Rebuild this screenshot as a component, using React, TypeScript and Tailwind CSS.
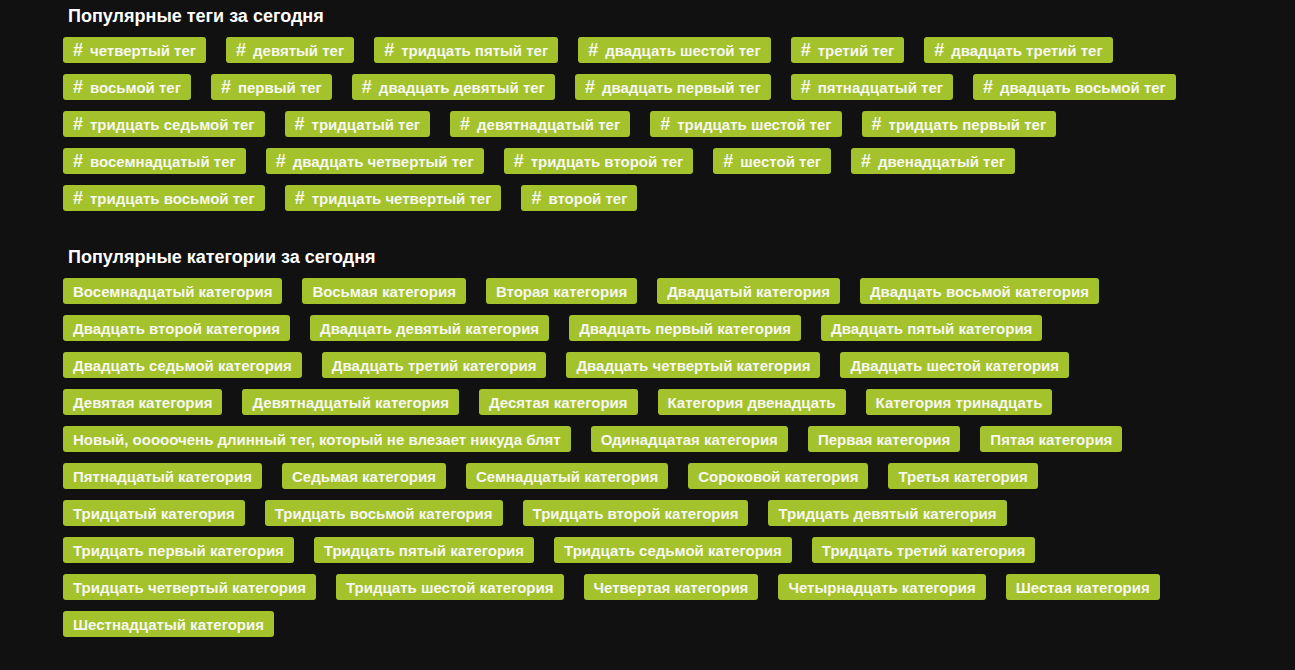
const tags = [
  "четвертый тег",
  "девятый тег",
  "тридцать пятый тег",
  "двадцать шестой тег",
  "третий тег",
  "двадцать третий тег",
  "восьмой тег",
  "первый тег",
  "двадцать девятый тег",
  "двадцать первый тег",
  "пятнадцатый тег",
  "двадцать восьмой тег",
  "тридцать седьмой тег",
  "тридцатый тег",
  "девятнадцатый тег",
  "тридцать шестой тег",
  "тридцать первый тег",
  "восемнадцатый тег",
  "двадцать четвертый тег",
  "тридцать второй тег",
  "шестой тег",
  "двенадцатый тег",
  "тридцать восьмой тег",
  "тридцать четвертый тег",
  "второй тег",
];

const categories = [
  "Восемнадцатый категория",
  "Восьмая категория",
  "Вторая категория",
  "Двадцатый категория",
  "Двадцать восьмой категория",
  "Двадцать второй категория",
  "Двадцать девятый категория",
  "Двадцать первый категория",
  "Двадцать пятый категория",
  "Двадцать седьмой категория",
  "Двадцать третий категория",
  "Двадцать четвертый категория",
  "Двадцать шестой категория",
  "Девятая категория",
  "Девятнадцатый категория",
  "Десятая категория",
  "Категория двенадцать",
  "Категория тринадцать",
  "Новый, ооооочень длинный тег, который не влезает никуда блят",
  "Одинадцатая категория",
  "Первая категория",
  "Пятая категория",
  "Пятнадцатый категория",
  "Седьмая категория",
  "Семнадцатый категория",
  "Сороковой категория",
  "Третья категория",
  "Тридцатый категория",
  "Тридцать восьмой категория",
  "Тридцать второй категория",
  "Тридцать девятый категория",
  "Тридцать первый категория",
  "Тридцать пятый категория",
  "Тридцать седьмой категория",
  "Тридцать третий категория",
  "Тридцать четвертый категория",
  "Тридцать шестой категория",
  "Четвертая категория",
  "Четырнадцать категория",
  "Шестая категория",
  "Шестнадцатый категория",
];

function Chip({ label, hash }: { label: string; hash?: boolean }) {
  return (
    <a
      href="#"
      className="flex items-center h-[26px] px-[10px] rounded-[3px] bg-[#a3c22b] text-[#f7f7f2] text-[15px] font-bold leading-none whitespace-nowrap"
    >
      {hash && <span className="mr-[6px] w-[11px] text-[18px]">#</span>}
      {label}
    </a>
  );
}

export default function App() {
  return (
    <div
      className="min-h-[670px] bg-[#111111] pl-[63px] pr-[80px] pt-[6px]"
      style={{ fontFamily: '"Liberation Sans", Arial, sans-serif' }}
    >
      <section>
        <h2 className="pl-[5px] h-[20px] text-[18px] font-bold text-white leading-[20px]">
          Популярные теги за сегодня
        </h2>
        <div className="mt-[11px] flex flex-wrap gap-x-5 gap-y-[11px]">
          {tags.map((t) => (
            <Chip key={t} label={t} hash />
          ))}
        </div>
      </section>

      <section className="mt-[36px]">
        <h2 className="pl-[5px] h-[20px] text-[18px] font-bold text-white leading-[20px]">
          Популярные категории за сегодня
        </h2>
        <div className="mt-[11px] flex flex-wrap gap-x-5 gap-y-[11px]">
          {categories.map((c) => (
            <Chip key={c} label={c} />
          ))}
        </div>
      </section>
    </div>
  );
}
